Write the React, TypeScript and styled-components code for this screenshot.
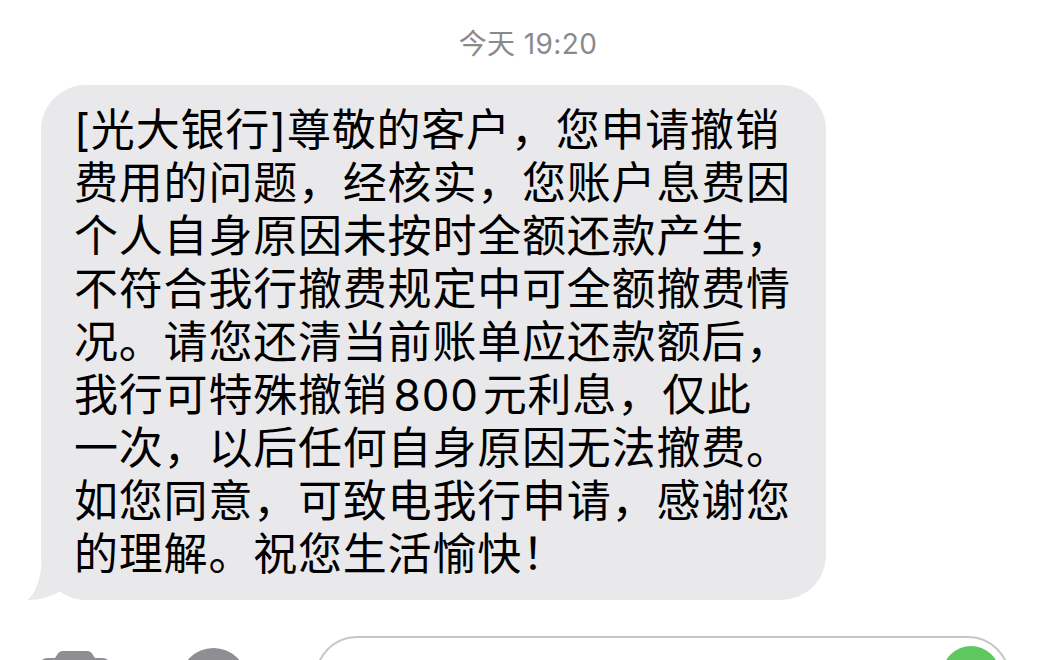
import React from "react";
import styled, { createGlobalStyle } from "styled-components";

const Global = createGlobalStyle`
  html, body { margin: 0; padding: 0; background: #ffffff; }
  body { font-family: "Inter", "Noto Sans CJK SC", sans-serif; }
`;

const Page = styled.div`
  width: 1056px;
  height: 660px;
  overflow: hidden;
  display: flex;
  flex-direction: column;
  background: #ffffff;
  & > * { flex-shrink: 0; }
`;

const Timestamp = styled.div`
  height: 85px;
  display: flex;
  align-items: center;
  justify-content: center;
  font-family: "Inter", "Noto Sans CJK SC", sans-serif;
  font-size: 28px;
  color: #8a8a8e;
  letter-spacing: 0.4px;
  padding-bottom: 2px;
  box-sizing: border-box;
`;

const MessageRow = styled.div`
  display: flex;
  padding-left: 41px;
`;

const Bubble = styled.div`
  position: relative;
  width: 785px;
  box-sizing: border-box;
  background: #e9e9eb;
  border-radius: 45px;
  padding: 19px 20px 19px 33px;
`;

const Tail = styled.svg`
  position: absolute;
  left: -13px;
  bottom: 0;
  width: 52px;
  height: 50px;
`;

const Text = styled.div`
  font-family: "Inter", "Noto Sans CJK SC", sans-serif;
  font-size: 44px;
  line-height: 53px;
  letter-spacing: 0.8px;
  color: #000000;
  white-space: nowrap;
`;

const Line = styled.div``;

const Num = styled.span`
  margin: 0 4px 0 6px;
`;

const BottomBar = styled.div`
  margin-top: 36px;
  display: flex;
  align-items: flex-start;
  padding-left: 40px;
  padding-right: 46px;
`;

const CameraIcon = styled.svg`
  width: 70px;
  height: 40px;
  margin-top: 15px;
  flex-shrink: 0;
`;

const AppsIcon = styled.div`
  width: 67px;
  height: 67px;
  border-radius: 50%;
  background: #8e8e93;
  margin-top: 12px;
  margin-left: 70px;
  flex-shrink: 0;
`;

const InputField = styled.div`
  flex: 1;
  height: 84px;
  margin-left: 68px;
  border: 2px solid #c6c6c8;
  border-radius: 42px;
  box-sizing: border-box;
  display: flex;
  justify-content: flex-end;
  padding: 8px 8px 0 0;
`;

const SendButton = styled.div`
  width: 58px;
  height: 58px;
  border-radius: 50%;
  background: #5ec85e;
`;

const lines: React.ReactNode[] = [
  "[光大银行]尊敬的客户，您申请撤销",
  "费用的问题，经核实，您账户息费因",
  "个人自身原因未按时全额还款产生，",
  "不符合我行撤费规定中可全额撤费情",
  "况。请您还清当前账单应还款额后，",
  <>
    我行可特殊撤销<Num>800</Num>元利息，仅此
  </>,
  "一次，以后任何自身原因无法撤费。",
  "如您同意，可致电我行申请，感谢您",
  "的理解。祝您生活愉快！",
];

export default function App() {
  return (
    <Page>
      <Global />
      <Timestamp>今天 19:20</Timestamp>
      <MessageRow>
        <Bubble>
          <Tail viewBox="0 0 52 50">
            <path d="M14 0 C14 26 9 41 0 50 C11 50 21 47 31 42 L34 42 L34 0 Z" fill="#e9e9eb" />
          </Tail>
          <Text>
            {lines.map((l, i) => (
              <Line key={i}>{l}</Line>
            ))}
          </Text>
        </Bubble>
      </MessageRow>
      <BottomBar>
        <CameraIcon viewBox="0 0 70 40">
          <path d="M23 0 H47 Q51 0 53 4 L55 7 H62 Q70 7 70 15 V40 H0 V15 Q0 7 8 7 H15 L17 4 Q19 0 23 0 Z" fill="#8e8e93" />
        </CameraIcon>
        <AppsIcon />
        <InputField>
          <SendButton />
        </InputField>
      </BottomBar>
    </Page>
  );
}
